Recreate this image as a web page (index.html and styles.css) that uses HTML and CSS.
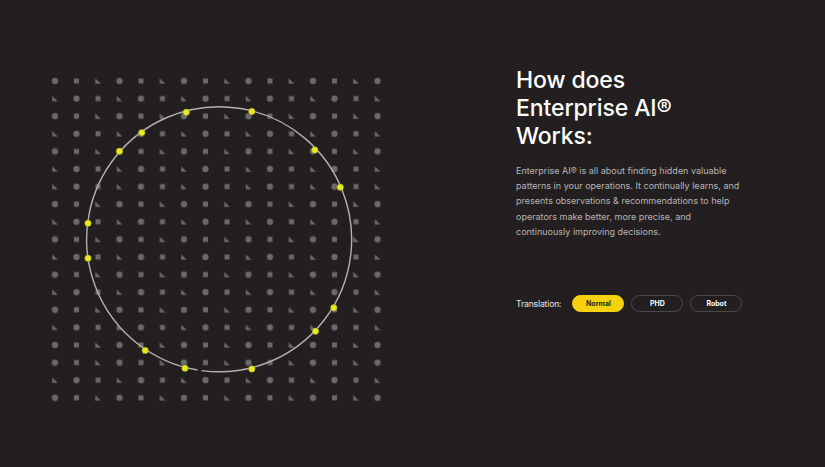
FILE: index.html
```html
<!DOCTYPE html>
<html lang="en">
<head>
<meta charset="utf-8">
<title>How does Enterprise AI Works</title>
<link rel="stylesheet" href="styles.css">
</head>
<body>
<main class="page">
  <div class="art">
    <svg class="grid-svg" width="360" height="360" viewBox="40 60 360 360" xmlns="http://www.w3.org/2000/svg">
      <defs>
        <pattern id="pa" x="44.25" y="72.2" width="64.5" height="17.6" patternUnits="userSpaceOnUse">
          <circle cx="10.75" cy="8.8" r="3.1" fill="#6a6868"/>
          <rect x="29.75" y="6.3" width="5" height="5" fill="#6a6868"/>
          <polygon points="51,6 51,11.6 56.6,11.6" fill="#6a6868"/>
        </pattern>
        <pattern id="pb" x="44.25" y="72.2" width="64.5" height="17.6" patternUnits="userSpaceOnUse">
          <polygon points="8,6 8,11.6 13.6,11.6" fill="#6a6868"/>
          <circle cx="32.25" cy="8.8" r="3.1" fill="#6a6868"/>
          <rect x="51.25" y="6.3" width="5" height="5" fill="#6a6868"/>
        </pattern>
      </defs>
      <g class="rows">
        <rect x="44.25" y="72.2" width="344" height="17.6" fill="url(#pa)"/>
        <rect x="44.25" y="89.8" width="344" height="17.6" fill="url(#pb)"/>
        <rect x="44.25" y="107.4" width="344" height="17.6" fill="url(#pa)"/>
        <rect x="44.25" y="125" width="344" height="17.6" fill="url(#pb)"/>
        <rect x="44.25" y="142.6" width="344" height="17.6" fill="url(#pa)"/>
        <rect x="44.25" y="160.2" width="344" height="17.6" fill="url(#pb)"/>
        <rect x="44.25" y="177.8" width="344" height="17.6" fill="url(#pb)"/>
        <rect x="44.25" y="195.4" width="344" height="17.6" fill="url(#pa)"/>
        <rect x="44.25" y="213" width="344" height="17.6" fill="url(#pb)"/>
        <rect x="44.25" y="230.6" width="344" height="17.6" fill="url(#pa)"/>
        <rect x="44.25" y="248.2" width="344" height="17.6" fill="url(#pb)"/>
        <rect x="44.25" y="265.8" width="344" height="17.6" fill="url(#pa)"/>
        <rect x="44.25" y="283.4" width="344" height="17.6" fill="url(#pb)"/>
        <rect x="44.25" y="301" width="344" height="17.6" fill="url(#pa)"/>
        <rect x="44.25" y="318.6" width="344" height="17.6" fill="url(#pb)"/>
        <rect x="44.25" y="336.2" width="344" height="17.6" fill="url(#pa)"/>
        <rect x="44.25" y="353.8" width="344" height="17.6" fill="url(#pa)"/>
        <rect x="44.25" y="371.4" width="344" height="17.6" fill="url(#pb)"/>
        <rect x="44.25" y="389" width="344" height="17.6" fill="url(#pa)"/>
      </g>
      <path d="M201.5 370.6 A132.5 132.5 0 1 0 197.5 370" fill="none" stroke="#b3b1b1" stroke-width="1.4"/>
      <g class="dots" fill="#e6ea1e" stroke="#9a9a1c" stroke-width="0.5">
        <circle cx="186.3" cy="112.3" r="3.2"/>
        <circle cx="251.8" cy="111.5" r="3.2"/>
        <circle cx="141.8" cy="132.6" r="3.2"/>
        <circle cx="314.8" cy="150" r="3.2"/>
        <circle cx="119.5" cy="151.3" r="3.2"/>
        <circle cx="340.3" cy="187.3" r="3.2"/>
        <circle cx="88" cy="223.3" r="3.2"/>
        <circle cx="88" cy="258.3" r="3.2"/>
        <circle cx="333.8" cy="307.8" r="3.2"/>
        <circle cx="315.5" cy="331.3" r="3.2"/>
        <circle cx="145.2" cy="350.4" r="3.2"/>
        <circle cx="185" cy="368.3" r="3.2"/>
        <circle cx="251.8" cy="369" r="3.2"/>
      </g>
    </svg>
  </div>
  <section class="info">
    <h1 class="title">How does<br>Enterprise AI®<br>Works:</h1>
    <p class="lead">Enterprise AI® is all about finding hidden valuable patterns in your operations. It continually learns, and presents observations &amp; recommendations to help operators make better, more precise, and continuously improving decisions.</p>
    <div class="translation">
      <span class="translation-label">Translation:</span>
      <button class="pill pill-active" type="button">Normal</button>
      <button class="pill" type="button">PHD</button>
      <button class="pill" type="button">Robot</button>
    </div>
  </section>
</main>
</body>
</html>
```
FILE: styles.css
```css
html, body {
  margin: 0;
  padding: 0;
  background: #231f20;
}

body {
  width: 825px;
  height: 467px;
  overflow: hidden;
  font-family: Inter, "Liberation Sans", sans-serif;
  color: #ffffff;
}

.page {
  display: flex;
  align-items: flex-start;
  padding: 60px 0 0 40px;
}

.art {
  flex: 0 0 360px;
  height: 360px;
}

.grid-svg {
  display: block;
}

.info {
  margin-left: 116px;
  padding-top: 6px;
  width: 250px;
}

.title {
  margin: 0;
  font-size: 23px;
  line-height: 28px;
  font-weight: 500;
  letter-spacing: -0.1px;
  color: #ffffff;
}

.lead {
  margin: 13px 0 0;
  width: 232px;
  font-size: 9px;
  line-height: 15.2px;
  color: #b7b4b4;
}

.translation {
  display: flex;
  align-items: center;
  margin-top: 56px;
  gap: 7px;
}

.translation-label {
  font-size: 8.6px;
  letter-spacing: -0.15px;
  color: #e6e4e4;
  margin-right: 4px;
}

.pill {
  width: 52px;
  height: 17px;
  padding: 0;
  border-radius: 9px;
  border: 1px solid #4d4a4a;
  background: transparent;
  color: #ffffff;
  font-family: Inter, "Liberation Sans", sans-serif;
  font-size: 7px;
  font-weight: 700;
  line-height: 15px;
}

.pill-active {
  background: #f5d20d;
  border-color: #f5d20d;
  color: #231f20;
}
```
